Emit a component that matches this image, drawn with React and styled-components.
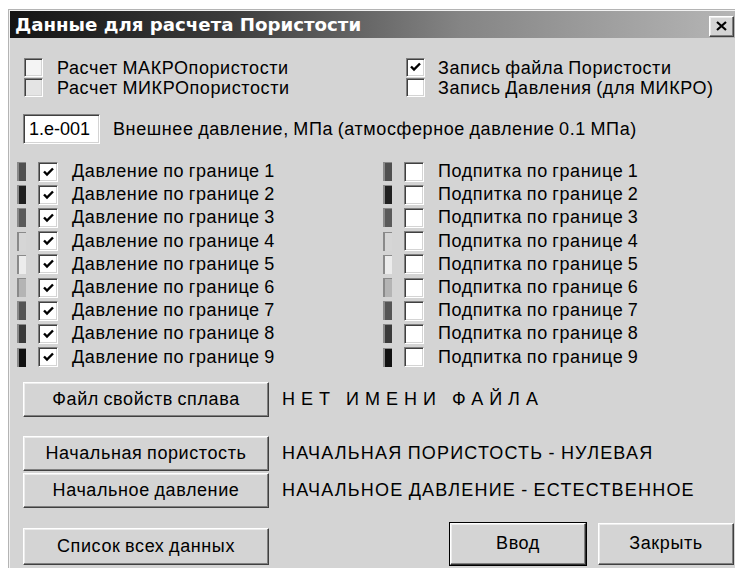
import React from "react";
import styled, { createGlobalStyle } from "styled-components";

const GlobalStyle = createGlobalStyle`
  html, body {
    margin: 0;
    padding: 0;
    background: #ffffff;
    overflow: hidden;
  }
  body {
    font-family: "Liberation Sans", Arial, sans-serif;
    color: #000;
  }
`;

const FACE = "#d4d4d4";

const Dialog = styled.div`
  margin: 9px 0 0 8px;
  width: 731px;
  height: 570px;
  box-sizing: border-box;
  padding: 2px 0 0 2px;
  background: ${FACE};
  box-shadow: inset 1px 1px #b4b4b4, inset 2px 2px #f2f2f2;
  display: flex;
  flex-direction: column;
  font-size: 18px;
  letter-spacing: 0.6px;
  word-spacing: -1px;
`;

const TitleBar = styled.div`
  height: 27px;
  display: flex;
  align-items: center;
  justify-content: space-between;
  padding: 0 5px 0 5px;
  background: linear-gradient(to right, #141414 0%, #3c3c3c 30%, #858585 62%, #b6b6b6 100%);
`;

const Title = styled.span`
  font-family: "DejaVu Sans", Verdana, sans-serif;
  font-weight: bold;
  font-size: 18.2px;
  letter-spacing: 0;
  word-spacing: 0;
  color: #fff;
`;

const CloseButton = styled.button`
  width: 25px;
  height: 21px;
  margin-top: 3px;
  padding: 0;
  display: flex;
  align-items: center;
  justify-content: center;
  background: ${FACE};
  border: 1px solid;
  border-color: #fff #404040 #404040 #fff;
  box-shadow: inset -1px -1px #808080, inset 1px 1px #ececec;
`;

const Options = styled.div`
  margin-top: 19px;
  padding-left: 14px;
  display: grid;
  grid-template-columns: 382px auto;
  grid-auto-rows: 20px;
`;

const CheckRow = styled.label`
  display: flex;
  align-items: center;
  gap: ${(p) => p.$gap || 14}px;
  white-space: nowrap;
  padding-top: 3px;
`;

const Box = styled.span`
  width: 19px;
  height: 19px;
  box-sizing: border-box;
  flex: none;
  display: flex;
  align-items: center;
  justify-content: center;
  margin-top: -3px;
  background: ${(p) => p.$fill || "#fff"};
  border: 1px solid;
  border-color: #808080 #fff #fff #808080;
  box-shadow: inset 1px 1px #404040, inset -1px -1px ${FACE};
`;

const PressureRow = styled.div`
  margin-top: 17px;
  padding-left: 13px;
  display: flex;
  align-items: center;
  gap: 13px;
  white-space: nowrap;
`;

const NumberField = styled.div`
  width: 77px;
  height: 30px;
  box-sizing: border-box;
  display: flex;
  align-items: center;
  padding-left: 5px;
  letter-spacing: 0;
  background: #fff;
  border: 1px solid;
  border-color: #808080 #fff #fff #808080;
  box-shadow: inset 1px 1px #404040, inset -1px -1px ${FACE};
`;

const Boundaries = styled.div`
  margin-top: 16px;
  padding-left: 7px;
  display: grid;
  grid-template-columns: 366px auto;
  grid-template-rows: repeat(9, 23.2px);
  grid-auto-flow: column;
`;

const BoundaryRow = styled.div`
  display: flex;
  align-items: center;
  white-space: nowrap;
`;

const Swatch = styled.span`
  width: 9px;
  height: 19px;
  box-sizing: border-box;
  flex: none;
  margin-right: 12px;
  background: ${(p) => p.$color};
  border-left: 2px solid #8a8a8a;
  border-top: 1px solid #8a8a8a;
`;

const BoundaryBox = styled(Box)`
  width: 20px;
  height: 20px;
  margin-top: 0;
  margin-right: 14px;
`;

const ActionRow = styled.div`
  margin-top: ${(p) => p.$top}px;
  padding-left: 13px;
  display: flex;
  align-items: center;
  gap: 13px;
  white-space: nowrap;
`;

const Stack = styled.div`
  margin-top: 19px;
  display: flex;
  flex-direction: column;
  gap: 2px;
`;

const Button = styled.button`
  width: ${(p) => p.$w || 246}px;
  height: ${(p) => p.$h || 35}px;
  flex: none;
  box-sizing: border-box;
  padding: 0;
  font-family: "Liberation Sans", Arial, sans-serif;
  font-size: 18px;
  letter-spacing: 0.6px;
  word-spacing: -1px;
  color: #000;
  background: ${FACE};
  border: 1px solid;
  border-color: #fff #404040 #404040 #fff;
  box-shadow: inset -1px -1px #808080, inset 1px 1px #ececec;
  ${(p) =>
    p.$default &&
    `
    outline: 1px solid #000;
    outline-offset: 0;
    border-color: #fff #303030 #303030 #fff;
  `}
`;

const Status = styled.span`
  letter-spacing: ${(p) => p.$spacing}px;
`;

const Footer = styled.div`
  margin-top: 15px;
  padding: 0 5px 0 13px;
  display: flex;
  align-items: flex-end;
  justify-content: space-between;
`;

const DialogButtons = styled.div`
  display: flex;
  gap: 12px;
`;

const Check = () => (
  <svg width="11" height="10" viewBox="0 0 11 10">
    <path d="M1 4.5 L4 7.5 L10 1.5" fill="none" stroke="#000" strokeWidth="2.4" />
  </svg>
);

const swatches = [
  "#505050",
  "#202020",
  "#5a5a5a",
  "#d6d6d6",
  "#ececec",
  "#b4b4b4",
  "#555555",
  "#3a3a3a",
  "#111111",
];

export default function App() {
  const nums = [1, 2, 3, 4, 5, 6, 7, 8, 9];
  return (
    <>
      <GlobalStyle />
      <Dialog>
        <TitleBar>
          <Title>Данные для расчета Пористости</Title>
          <CloseButton>
            <svg width="11" height="10" viewBox="0 0 11 10">
              <path d="M1 1 L10 9 M10 1 L1 9" stroke="#000" strokeWidth="2.2" />
            </svg>
          </CloseButton>
        </TitleBar>

        <Options>
          <CheckRow>
            <Box $fill="#f4f4f4" />
            Расчет МАКРОпористости
          </CheckRow>
          <CheckRow $gap={13}>
            <Box>
              <Check />
            </Box>
            Запись файла Пористости
          </CheckRow>
          <CheckRow>
            <Box $fill="#e4e4e4" />
            Расчет МИКРОпористости
          </CheckRow>
          <CheckRow $gap={13}>
            <Box />
            Запись Давления (для МИКРО)
          </CheckRow>
        </Options>

        <PressureRow>
          <NumberField>1.e-001</NumberField>
          Внешнее давление, МПа (атмосферное давление 0.1 МПа)
        </PressureRow>

        <Boundaries>
          {nums.map((n) => (
            <BoundaryRow key={`p${n}`}>
              <Swatch $color={swatches[n - 1]} />
              <BoundaryBox>
                <Check />
              </BoundaryBox>
              Давление по границе {n}
            </BoundaryRow>
          ))}
          {nums.map((n) => (
            <BoundaryRow key={`f${n}`}>
              <Swatch $color={swatches[n - 1]} />
              <BoundaryBox />
              Подпитка по границе {n}
            </BoundaryRow>
          ))}
        </Boundaries>

        <ActionRow $top={13}>
          <Button>Файл свойств сплава</Button>
          <Status $spacing={6}>НЕТ ИМЕНИ ФАЙЛА</Status>
        </ActionRow>

        <Stack>
          <ActionRow $top={0}>
            <Button>Начальная пористость</Button>
            <Status $spacing={1.2}>НАЧАЛЬНАЯ ПОРИСТОСТЬ - НУЛЕВАЯ</Status>
          </ActionRow>
          <ActionRow $top={0}>
            <Button>Начальное давление</Button>
            <Status $spacing={1.2}>НАЧАЛЬНОЕ ДАВЛЕНИЕ - ЕСТЕСТВЕННОЕ</Status>
          </ActionRow>
        </Stack>

        <Footer>
          <Button $h={37}>Список всех данных</Button>
          <DialogButtons>
            <Button $w={136} $h={42} $default>
              Ввод
            </Button>
            <Button $w={136} $h={42}>
              Закрыть
            </Button>
          </DialogButtons>
        </Footer>
      </Dialog>
    </>
  );
}
